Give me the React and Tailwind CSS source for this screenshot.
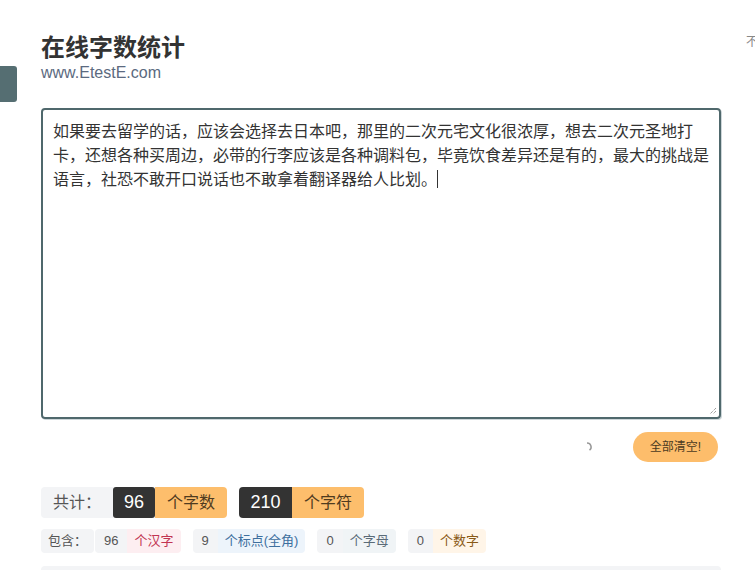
import React from "react";

const TEXT =
  "如果要去留学的话，应该会选择去日本吧，那里的二次元宅文化很浓厚，想去二次元圣地打卡，还想各种买周边，必带的行李应该是各种调料包，毕竟饮食差异还是有的，最大的挑战是语言，社恐不敢开口说话也不敢拿着翻译器给人比划。";

const FONT = "font-['Liberation_Sans','Noto_Sans_CJK_SC',sans-serif]";

function Chip({ num, label, labelCls }) {
  return (
    <div className="flex h-[24px] rounded-[4px] overflow-hidden text-[13px] leading-[24px]">
      <span className="px-[9px] bg-[#f3f4f6] text-[#555]">{num}</span>
      <span className={"px-[7px] " + labelCls}>{label}</span>
    </div>
  );
}

export default function App() {
  return (
    <div className={"relative w-[755px] h-[570px] overflow-hidden bg-white " + FONT}>
      <div className="absolute left-0 top-[66px] w-[17px] h-[36px] bg-[#556e72] rounded-r-[3px]" />
      <div className="flex">
        <main className="w-[746px] shrink-0 pl-[41px] pr-[25px] pt-[33px]">
          <h1 className="text-[24px] font-bold leading-[30px] text-[#333]">在线字数统计</h1>
          <div className="text-[16px] leading-[20px] text-[#5b6a80]">www.EtestE.com</div>

          <div className="relative mt-[25px] h-[311px] w-[680px] rounded-[4px] border-2 border-[#4f686c] shadow-[1px_1px_0_#cdd6d9] px-[10px] py-[10px]">
            <p className="text-[16px] leading-[24px] text-[#333]">
              {TEXT}
              <span className="inline-block w-px h-[18px] bg-[#333] align-[-3px]" />
            </p>
            <svg className="absolute right-[2px] bottom-[2px]" width="9" height="9" viewBox="0 0 9 9">
              <path d="M8 2 L2 8 M8 5 L5 8" stroke="#777" strokeWidth="1" strokeDasharray="1 1" />
            </svg>
          </div>

          <div className="mt-[13px] flex items-center justify-end pr-[3px]">
            <svg className="mr-[40px]" width="12" height="12" viewBox="0 0 12 12">
              <path d="M6 2 A4 4 0 0 1 8.5 9.2" fill="none" stroke="#999" strokeWidth="1.5" />
            </svg>
            <button className="h-[30px] w-[85px] rounded-full bg-[#fdbd6b] text-[12px] text-[#4a3a22]">
              全部清空!
            </button>
          </div>

          <div className="mt-[25px] flex gap-[12px] h-[31px] leading-[31px]">
            <div className="flex">
              <span className="px-3 bg-[#f3f4f6] text-[#555] text-[16px] rounded-l-[4px]">共计：</span>
              <span className="w-[42px] text-center bg-[#333] text-white text-[18px] rounded-[3px]">96</span>
              <span className="px-3 bg-[#fdbe6c] text-[#4f3b1f] text-[16px] rounded-r-[4px]">个字数</span>
            </div>
            <div className="flex">
              <span className="w-[53px] text-center bg-[#333] text-white text-[18px] rounded-l-[4px]">210</span>
              <span className="px-3 bg-[#fdbe6c] text-[#4f3b1f] text-[16px] rounded-r-[4px]">个字符</span>
            </div>
          </div>

          <div className="mt-[11px] flex items-center">
            <span className="h-[24px] leading-[24px] px-[7px] bg-[#f3f4f6] text-[#555] text-[13px] rounded-[4px] mr-[1px]">包含：</span>
            <div className="flex gap-[12px]">
              <Chip num="96" label="个汉字" labelCls="bg-[#fdeef1] text-[#c23452]" />
              <Chip num="9" label="个标点(全角)" labelCls="bg-[#edf4fb] text-[#3d6f9e]" />
              <Chip num="0" label="个字母" labelCls="bg-[#f0f4f6] text-[#5a6b78]" />
              <Chip num="0" label="个数字" labelCls="bg-[#fff5e8] text-[#8a5a16]" />
            </div>
          </div>

          <div className="mt-[13px] h-[30px] w-[680px] rounded-t-[4px] bg-[#f3f4f6]" />
        </main>
        <aside className="pt-[34px] text-[12px] leading-[16px] text-[#888] whitespace-nowrap">不要复制</aside>
      </div>
    </div>
  );
}
